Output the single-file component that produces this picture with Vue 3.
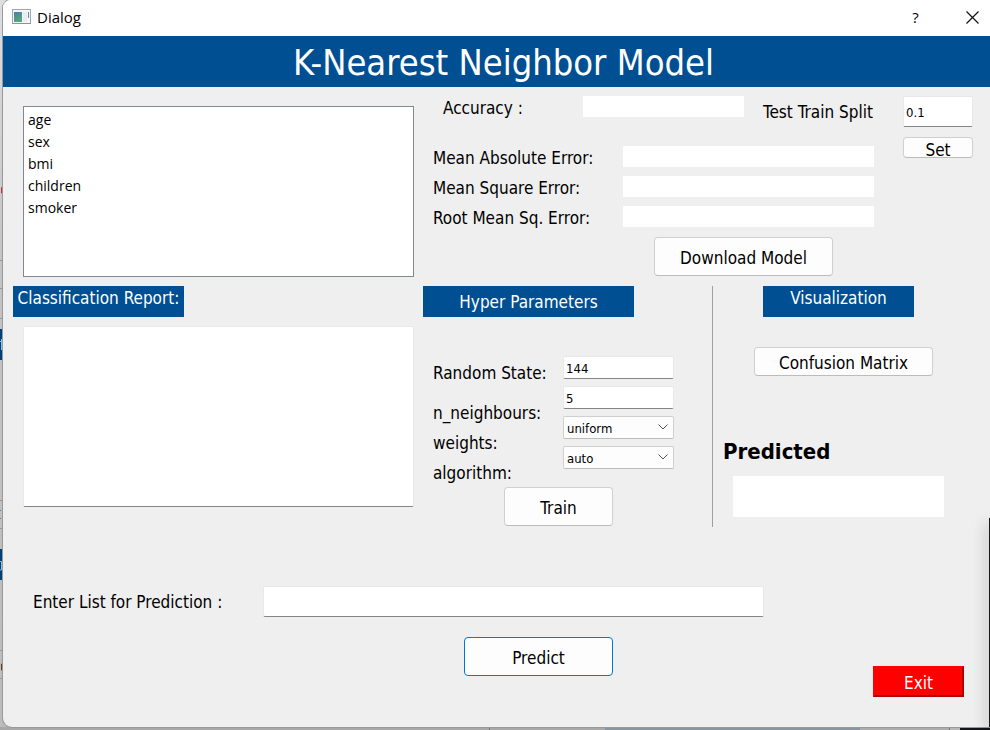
<script setup>
import { ref } from 'vue'

const features = ['age', 'sex', 'bmi', 'children', 'smoker']
const metrics = ref([
  { id: 'mae', label: 'Mean Absolute Error:', value: '' },
  { id: 'mse', label: 'Mean Square Error:', value: '' },
  { id: 'rmse', label: 'Root Mean Sq. Error:', value: '' },
])
const accuracy = ref('')
const split = ref('0.1')
const report = ref('')
const randomState = ref('144')
const neighbours = ref('5')
const weights = ref('uniform')
const algorithm = ref('auto')
const predicted = ref('')
const entry = ref('')
</script>

<template>
  <div class="desktop">
    <svg class="behind" width="3" height="730" viewBox="0 0 3 730" aria-hidden="true">
      <path d="M0 260.5H3M0 288.5H3M0 318.5H3M0 500.5H3M0 528.5H3M0 650.5H3M0 678.5H3" stroke="#999" />
      <rect y="329" width="3" height="31" fill="#004178" />
      <rect y="549" width="3" height="31" fill="#004178" />
      <path d="M3 187.5H1.500V193H3M1.500 190.500H3" stroke="#b33" fill="none" />
      <path d="M0 341.500H2M1.500 339V350" stroke="#8fc0df" fill="none" />
      <path d="M0 510.500H1M0 518.500H1" stroke="#2d8fc8" />
      <path d="M2.500 508V522" stroke="#8a4a1c" />
      <path d="M0 561.500H1.500V570H0" stroke="#8fc0df" fill="none" />
      <path d="M3 664H1.500V670H3" stroke="#6a3a18" fill="none" />
    </svg>
    <main class="dialog">
      <header class="titlebar">
        <svg class="app-icon" width="19" height="16" viewBox="0 0 19 16" aria-hidden="true">
          <defs>
            <linearGradient id="pane" x1="0" y1="0" x2="0.4" y2="1">
              <stop offset="0" stop-color="#4a7fa8" />
              <stop offset="1" stop-color="#58a878" />
            </linearGradient>
          </defs>
          <rect x="0.5" y="0.5" width="18" height="14" fill="#f4f5f6" stroke="#a2a5ac" />
          <rect x="0" y="14" width="19" height="1" fill="#8f9299" />
          <rect x="2" y="3" width="8" height="10" fill="url(#pane)" />
          <rect x="11" y="3" width="4" height="10" fill="#e9ecec" />
          <rect x="16" y="3" width="1" height="6" fill="#5d93a0" />
        </svg>
        <span class="caption">Dialog</span>
        <button class="chrome" type="button" aria-label="Help">?</button>
        <button class="chrome close" type="button" aria-label="Close">
          <svg width="13" height="13" viewBox="0 0 13 13" aria-hidden="true">
            <path d="M0.5 0.5L12.5 12.5M12.5 0.5L0.5 12.5" stroke="#111" stroke-width="1.2" fill="none" />
          </svg>
        </button>
      </header>

      <h1 class="banner">K-Nearest Neighbor Model</h1>

      <section class="summary">
        <ul class="features">
          <li v-for="f in features" :key="f">{{ f }}</li>
        </ul>
        <div class="scores">
          <div class="accuracy">
            <label for="accuracy">Accuracy :</label>
            <input id="accuracy" v-model="accuracy" class="plain" readonly />
            <label class="split-label" for="split">Test Train Split</label>
          </div>
          <div v-for="m in metrics" :key="m.id" class="metric">
            <label :for="m.id">{{ m.label }}</label>
            <input :id="m.id" v-model="m.value" class="plain" readonly />
          </div>
          <button class="btn download" type="button">Download Model</button>
        </div>
        <div class="split">
          <input id="split" v-model="split" class="line tall" />
          <button class="btn set" type="button">Set</button>
        </div>
      </section>

      <section class="panels">
        <div class="report">
          <label class="tag top" for="report">Classification Report:</label>
          <textarea id="report" v-model="report" class="line"></textarea>
        </div>

        <div class="hyper">
          <h2 class="tag">Hyper Parameters</h2>
          <div class="form">
            <div class="names">
              <label class="first" for="state">Random State:</label>
              <label for="neighbours">n_neighbours:</label>
              <label for="weights">weights:</label>
              <label for="algorithm">algorithm:</label>
            </div>
            <div class="fields">
              <input id="state" v-model="randomState" class="line" />
              <input id="neighbours" v-model="neighbours" class="line" />
              <div class="combo">
                <select id="weights" v-model="weights">
                  <option>uniform</option>
                  <option>distance</option>
                </select>
                <svg width="10" height="6" viewBox="0 0 10 6" aria-hidden="true">
                  <path d="M0.5 0.5L5 5L9.5 0.5" stroke="#555" fill="none" />
                </svg>
              </div>
              <div class="combo">
                <select id="algorithm" v-model="algorithm">
                  <option>auto</option>
                  <option>ball_tree</option>
                  <option>kd_tree</option>
                  <option>brute</option>
                </select>
                <svg width="10" height="6" viewBox="0 0 10 6" aria-hidden="true">
                  <path d="M0.5 0.5L5 5L9.5 0.5" stroke="#555" fill="none" />
                </svg>
              </div>
            </div>
          </div>
          <button class="btn train" type="button">Train</button>
        </div>

        <div class="visual">
          <h2 class="tag top narrow">Visualization</h2>
          <button class="btn matrix" type="button">Confusion Matrix</button>
          <label class="predicted" for="predicted">Predicted</label>
          <input id="predicted" v-model="predicted" class="plain result" readonly />
        </div>
      </section>

      <section class="predict">
        <div class="entry">
          <label for="entry">Enter List for Prediction :</label>
          <input id="entry" v-model="entry" class="line tall" />
        </div>
        <div class="actions">
          <button class="btn go" type="button">Predict</button>
          <button class="exit" type="button">Exit</button>
        </div>
      </section>
    </main>
    <div class="neighbour-shadow"></div>
  </div>
</template>

<style>
body {
  margin: 0;
}
</style>

<style scoped>
.desktop {
  position: relative;
  box-sizing: border-box;
  min-height: 100vh;
  display: flex;
  overflow: hidden;
  padding: 0 0 3px 3px;
  font-family: "DejaVu Sans Condensed", "DejaVu Sans", sans-serif;
  font-size: 17px;
  line-height: 24px;
  color: #000;
  background:
    linear-gradient(90deg, #a8a8a8 489px, #777 489px 490px, #a8a8a8 490px 605px, #8995a1 605px 860px, #acacac 860px 949px, #777 949px 950px, #b8b8b8 950px 960px, #14141c 960px) 0 100% / 100% 3px no-repeat,
    linear-gradient(#dedede, #c4c4c4 260px, #bcbcbc);
}

.behind {
  position: absolute;
  left: 0;
  top: 0;
}

.dialog {
  position: relative;
  flex: 1;
  min-width: 0;
  border-radius: 8px 0 0 9px;
  overflow: hidden;
  background: #efefef;
  box-shadow: 0 0 0 1px #999;
}

.titlebar {
  display: flex;
  align-items: center;
  height: 34px;
  padding: 0 0 2px 9px;
  background: #fff;
}

.caption {
  flex: 1;
  padding-left: 6px;
  font: 15px/20px "Open Sans", sans-serif;
}

.chrome {
  display: flex;
  align-items: center;
  justify-content: center;
  width: 79px;
  height: 34px;
  padding: 0;
  border: 0;
  background: none;
  font: 15px/20px "Open Sans", sans-serif;
  color: #000;
}

.close {
  width: 35px;
}

.banner {
  margin: 0;
  height: 51px;
  padding-left: 14px;
  background: #004f92;
  color: #fff;
  font-size: 36px;
  font-weight: 400;
  line-height: 54px;
  text-align: center;
}

input,
textarea,
select,
button {
  box-sizing: border-box;
  margin: 0;
  font-family: inherit;
  color: #000;
}

.plain {
  height: 21px;
  min-width: 0;
  padding: 0 3px;
  border: 0;
  background: #fff;
}

.line {
  display: block;
  width: 100%;
  height: 23px;
  padding: 2px 2px 0;
  border: 1px solid #e8e8e8;
  border-bottom-color: #858585;
  border-radius: 2px;
  background: #fff;
  font-size: 13px;
}

.line.tall {
  height: 31px;
}

.btn {
  padding: 2px 0 0;
  border: 1px solid #d0d0d0;
  border-bottom-color: #bcbcbc;
  border-radius: 4px;
  background: #fdfdfd;
  font-size: 17px;
}

.summary {
  display: grid;
  grid-template-columns: 391fr 451fr 70px;
  column-gap: 19px;
  height: 199px;
  padding: 0 17px 0 20px;
}

.features {
  height: 171px;
  box-sizing: border-box;
  margin: 19px 0 0;
  padding: 2px 4px;
  border: 1px solid #828790;
  background: #fff;
  list-style: none;
  font: 14px/22px "Open Sans", sans-serif;
}

.scores {
  display: flex;
  flex-direction: column;
  gap: 9px;
  padding-top: 9px;
}

.accuracy {
  display: grid;
  grid-template-columns: 140fr 180fr 121px;
  align-items: start;
  height: 41px;
  padding-left: 10px;
}

.accuracy .plain {
  margin-right: 19px;
}

.split-label {
  padding-top: 4px;
  white-space: nowrap;
}

.metric {
  display: grid;
  grid-template-columns: 190fr 251fr;
  height: 21px;
  padding-right: 10px;
  white-space: nowrap;
}

.download {
  width: 179px;
  height: 39px;
  margin: 1px 0 0 221px;
}

.split {
  display: flex;
  flex-direction: column;
  gap: 10px;
  padding-top: 9px;
}

.set {
  height: 21px;
}

.panels {
  display: grid;
  grid-template-columns: 400fr 290fr 260fr;
  height: 241px;
  padding: 0 17px 0 20px;
}

.tag {
  display: block;
  box-sizing: border-box;
  height: 31px;
  margin: 0;
  background: #004f92;
  color: #fff;
  font-size: 17px;
  font-weight: 400;
  line-height: 32px;
  text-align: center;
  white-space: nowrap;
}

.tag.top {
  line-height: 24px;
}

.report .tag {
  width: 171px;
  margin: 0 0 9px -10px;
}

.report textarea {
  width: auto;
  min-width: calc(100% - 9px);
  height: 181px;
  resize: none;
}

.hyper {
  border-right: 1px solid #a0a0a0;
}

.hyper .tag {
  width: 211px;
}

.form {
  display: grid;
  grid-template-columns: 130px 111px;
  padding: 39px 0 0 10px;
}

.names,
.fields {
  display: flex;
  flex-direction: column;
}

.names label {
  height: 30px;
  line-height: 30px;
}

.names .first {
  margin: 2px 0 10px;
}

.fields {
  gap: 7px;
}

.combo {
  position: relative;
}

.combo select {
  display: block;
  width: 100%;
  height: 23px;
  padding: 2px 3px 0;
  border: 1px solid #d0d0d0;
  border-bottom-color: #bcbcbc;
  border-radius: 2px;
  appearance: none;
  background: #fdfdfd;
  font-size: 13px;
}

.combo svg {
  position: absolute;
  right: 6px;
  top: 8px;
  pointer-events: none;
}

.train {
  display: block;
  width: 109px;
  height: 39px;
  margin: -1px 0 0 81px;
}

.visual {
  display: flex;
  flex-direction: column;
  align-items: flex-start;
  padding-left: 10px;
}

.narrow {
  width: 151px;
  margin-left: 40px;
}

.matrix {
  width: 179px;
  height: 29px;
  margin: 30px 0 0 31px;
}

.predicted {
  margin-top: 61px;
  font-size: 22px;
  font-weight: 700;
  line-height: 30px;
}

.result {
  width: 211px;
  height: 41px;
  margin: 9px 0 0 10px;
}

.predict {
  padding: 59px 26px 30px 30px;
}

.entry {
  display: grid;
  grid-template-columns: 230fr 501fr 200fr;
  align-items: center;
}

.actions {
  display: grid;
  grid-template-columns: 431fr 149px 260fr 91px;
  padding-top: 20px;
}

.go {
  grid-column: 2;
  height: 39px;
  border-color: #0078d4;
}

.exit {
  grid-column: 4;
  height: 31px;
  margin-top: 29px;
  padding: 2px 0 0;
  border: 2px outset #f00;
  background: #f00;
  color: #fff;
  font-size: 17px;
}

.neighbour-shadow {
  position: absolute;
  top: 518px;
  right: 0;
  bottom: 3px;
  width: 1px;
  background: #1a1a1a;
  box-shadow: 0 6px 14px 1px rgba(0, 0, 0, 0.45);
}
</style>
